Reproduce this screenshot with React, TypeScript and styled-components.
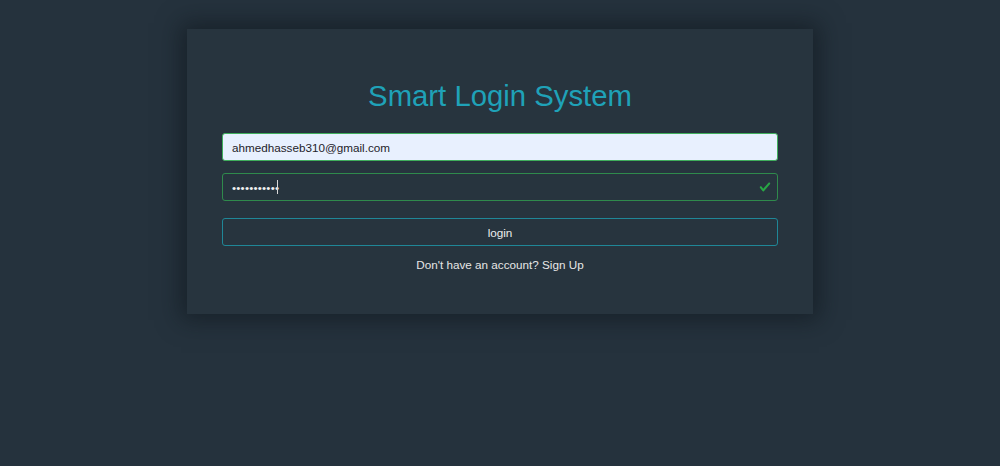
import React, { useState } from 'react';
import styled, { createGlobalStyle } from 'styled-components';

const GlobalStyle = createGlobalStyle`
	html, body {
		margin: 0;
		padding: 0;
		background-color: #25323d;
		font-family: 'Liberation Sans', Arial, sans-serif;
	}
	* {
		box-sizing: border-box;
	}
`;

const ValidIcon: React.FunctionComponent = () => (
	<svg width="12" height="12" viewBox="0 0 8 8">
		<path
			fill="#28a745"
			d="M2.3 6.73L.6 4.53c-.4-1.04.46-1.4 1.1-.8l1.1 1.4 3.4-3.8c.6-.63 1.6-.27 1.2.7l-4 4.6c-.43.5-.8.4-1.1.1z"
		/>
	</svg>
);

const App: React.FunctionComponent = () => {
	const [email, setEmail] = useState<string>('ahmedhasseb310@gmail.com');
	const [password, setPassword] = useState<string>('ahmed123456');

	const onSubmit = (e: React.FormEvent<HTMLFormElement>): void => {
		e.preventDefault();
	};

	return (
		<Page>
			<GlobalStyle />
			<Card>
				<Title>Smart Login System</Title>
				<Form onSubmit={onSubmit}>
					<Field>
						<TextInput
							type="email"
							value={email}
							$filled
							onChange={e => setEmail(e.target.value)}
						/>
					</Field>
					<Field>
						<TextInput
							type="password"
							value={password}
							onChange={e => setPassword(e.target.value)}
						/>
						<Caret />
						<IconSlot>
							<ValidIcon />
						</IconSlot>
					</Field>
					<LoginButton type="submit">login</LoginButton>
				</Form>
				<GuidePhrase>
					Don't have an account? <SignUpLink>Sign Up</SignUpLink>
				</GuidePhrase>
			</Card>
		</Page>
	);
};

const Page = styled.div`
	min-height: 466px;
	padding-top: 29px;
	display: flex;
	justify-content: center;
	align-items: flex-start;
`;

const Card = styled.section`
	width: 626px;
	padding: 49px 35px 40px;
	background-color: #27343e;
	box-shadow: 0 0 22px 6px rgba(12, 20, 26, 0.55);
	display: flex;
	flex-direction: column;
	align-items: stretch;
`;

const Title = styled.h1`
	margin: 0 0 20px;
	text-align: center;
	font-weight: 400;
	font-size: 29.3px;
	line-height: 35px;
	color: #1fa2b8;
`;

const Form = styled.form`
	display: flex;
	flex-direction: column;
`;

const Field = styled.div`
	position: relative;
	margin-bottom: 12px;
	&:nth-child(2) {
		margin-bottom: 17px;
	}
`;

const TextInput = styled.input<{ $filled?: boolean }>`
	display: block;
	width: 100%;
	height: 28px;
	padding: 2px 9px;
	border-radius: 3px;
	border: 1px solid ${props => (props.$filled ? '#3fae5c' : '#2f8a4c')};
	background-color: ${props => (props.$filled ? '#e8f0fe' : 'transparent')};
	color: ${props => (props.$filled ? '#1f232a' : '#f0f0f0')};
	font-family: 'Liberation Sans', Arial, sans-serif;
	font-size: 11.7px;
	letter-spacing: ${props => (props.$filled ? '0' : '0.2px')};
	&:focus {
		outline: none;
	}
`;

const Caret = styled.span`
	position: absolute;
	left: 55px;
	top: 7px;
	width: 1px;
	height: 14px;
	background-color: #d8d8d8;
`;

const IconSlot = styled.span`
	position: absolute;
	right: 7px;
	top: 8px;
	display: flex;
	line-height: 0;
`;

const LoginButton = styled.button`
	height: 28px;
	width: 100%;
	border-radius: 3px;
	border: 1px solid #1f8797;
	background: none;
	color: #ececec;
	font-family: 'Liberation Sans', Arial, sans-serif;
	font-size: 11.7px;
	cursor: pointer;
`;

const GuidePhrase = styled.p`
	margin: 10px 0 0;
	text-align: center;
	font-size: 11.7px;
	line-height: 17.5px;
	color: #e6e6e6;
`;

const SignUpLink = styled.span`
	cursor: pointer;
`;

export default App;
